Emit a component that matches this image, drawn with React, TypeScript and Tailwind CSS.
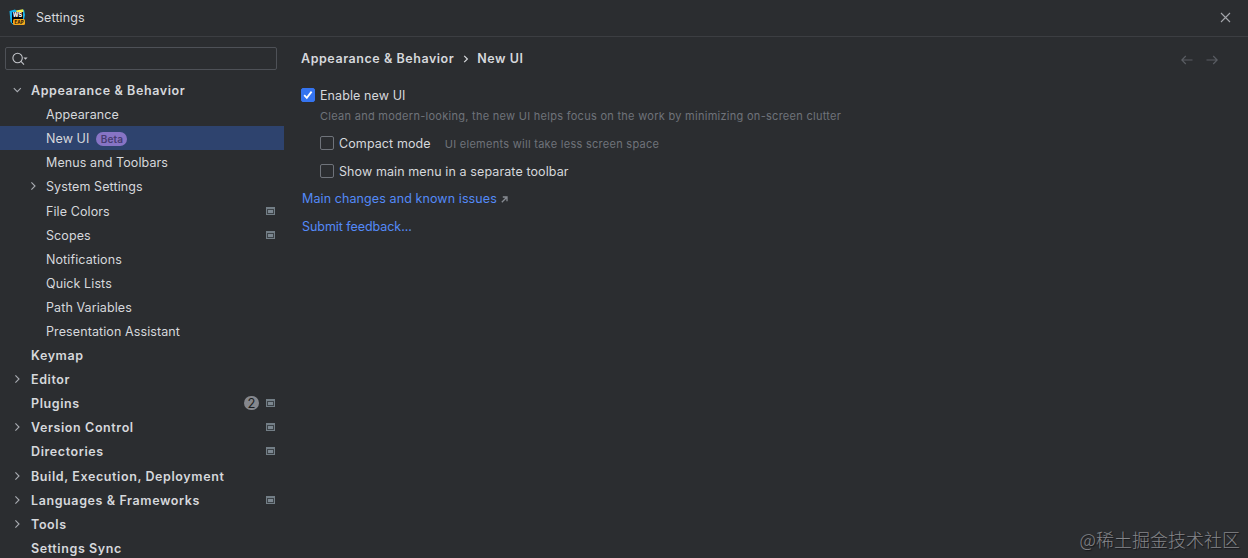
import clsx from "clsx"

type Item = {
  label: string
  level: 0 | 1
  arrow?: "open" | "closed"
  selected?: boolean
  project?: boolean
  count?: number
}

const items: Item[] = [
  { label: "Appearance & Behavior", level: 0, arrow: "open" },
  { label: "Appearance", level: 1 },
  { label: "New UI", level: 1, selected: true },
  { label: "Menus and Toolbars", level: 1 },
  { label: "System Settings", level: 1, arrow: "closed" },
  { label: "File Colors", level: 1, project: true },
  { label: "Scopes", level: 1, project: true },
  { label: "Notifications", level: 1 },
  { label: "Quick Lists", level: 1 },
  { label: "Path Variables", level: 1 },
  { label: "Presentation Assistant", level: 1 },
  { label: "Keymap", level: 0 },
  { label: "Editor", level: 0, arrow: "closed" },
  { label: "Plugins", level: 0, project: true, count: 2 },
  { label: "Version Control", level: 0, arrow: "closed", project: true },
  { label: "Directories", level: 0, project: true },
  { label: "Build, Execution, Deployment", level: 0, arrow: "closed" },
  { label: "Languages & Frameworks", level: 0, arrow: "closed", project: true },
  { label: "Tools", level: 0, arrow: "closed" },
  { label: "Settings Sync", level: 0 },
]

const Logo = () => (
  <svg width="17" height="17" viewBox="0 0 17 17" className="shrink-0">
    <path d="M0.5 2 L6 0.5 L9 3 L15 0.5 L16 6 L14 15 L4 15.5 L1.5 13 Z" fill="#16b5ee" />
    <path d="M7 1.5 L14 0.3 L14.5 3 L8 4 Z" fill="#f2f04c" />
    <rect x="3" y="3" width="11" height="11" fill="#050708" />
    <text x="3.8" y="8.4" fontSize="5.5" fontWeight="800" fill="#fff" letterSpacing="0">WS</text>
    <rect x="4" y="10" width="12" height="6" rx="1.5" fill="#f5a81c" />
    <text x="5.6" y="14.7" fontSize="4.5" fontWeight="800" fill="#3a2607" letterSpacing="0">EAP</text>
  </svg>
)

const Chevron = ({ open }: { open?: boolean }) => (
  <svg width="10" height="10" viewBox="0 0 10 10" fill="none" stroke="#a9acb2" strokeWidth="1.1">
    {open ? <path d="M1.8 3.2 L5.3 6.7 L8.8 3.2" /> : <path d="M3.4 1.3 L7 5 L3.4 8.7" />}
  </svg>
)

const ProjectIcon = () => (
  <svg width="9" height="8" viewBox="0 0 9 8" shapeRendering="crispEdges">
    <rect width="9" height="8" fill="#737e86" />
    <rect x="1" y="2" width="7" height="5" fill="#3c4247" />
    <rect x="2" y="3" width="5" height="3" fill="#7c8790" />
  </svg>
)

const Row = ({ item }: { item: Item }) => (
  <div className={clsx("flex h-[24.1px] items-center pr-[9px]", item.selected && "bg-[#2e436e]")}>
    <span className={clsx("flex shrink-0 items-center", item.level === 0 ? "w-[31px] pl-3" : "w-[46px] pl-[28px]")}>
      {item.arrow && <Chevron open={item.arrow === "open"} />}
    </span>
    <span className={clsx("whitespace-nowrap pt-[2px]", item.level === 0 && "font-semibold tracking-[0.6px]")}>
      {item.label}
    </span>
    {item.selected && (
      <span className="ml-[7px] mt-px flex h-[14px] w-[31px] items-center justify-center rounded-full bg-[#8774c5] text-[10px] font-semibold text-[#463c72]">
        Beta
      </span>
    )}
    <span className="ml-auto flex items-center gap-[7px]">
      {item.count && (
        <span className="flex h-[14px] w-[15px] items-center justify-center rounded-full bg-[#85878d] text-[13px] text-[#1e1f22]">
          {item.count}
        </span>
      )}
      {item.project && <ProjectIcon />}
    </span>
  </div>
)

const Checkbox = ({ checked }: { checked?: boolean }) => (
  <span
    className={clsx(
      "flex size-[14px] shrink-0 items-center justify-center rounded-[2px] border",
      checked ? "border-[#3574f0] bg-[#3574f0]" : "border-[#6f737a]"
    )}
  >
    {checked && (
      <svg width="10" height="10" viewBox="0 0 10 10" fill="none" stroke="#fff" strokeWidth="1.8" className="shrink-0">
        <path d="M1.2 5.2 L3.8 7.8 L8.6 1.6" />
      </svg>
    )}
  </span>
)

const Arrow = ({ back }: { back?: boolean }) => (
  <svg width="12" height="10" viewBox="0 0 12 10" fill="none" stroke="#5a5d63" strokeWidth="1.1">
    {back ? <path d="M11.5 5 H0.8 M4.8 1 L0.8 5 L4.8 9" /> : <path d="M0.5 5 H11.2 M7.2 1 L11.2 5 L7.2 9" />}
  </svg>
)

const App = () => {
  return (
    <div className="relative flex h-[558px] w-[1248px] flex-col overflow-hidden bg-[#2b2d30] font-['Inter',sans-serif] text-[12.5px] leading-4 tracking-[0.1px] text-[#d6d8dc]">
      <header className="flex h-[37px] shrink-0 items-center border-b border-[#3c3e42] pb-[2px] pl-[9px] pr-[17px]">
        <Logo />
        <span className="ml-[10px] pt-[2px]">Settings</span>
        <svg width="11" height="11" viewBox="0 0 11 11" className="ml-auto" stroke="#a4a6ab" strokeWidth="1.1">
          <path d="M1 1 L10 10 M10 1 L1 10" />
        </svg>
      </header>

      <div className="flex min-h-0 flex-1">
        <aside className="w-[284px] shrink-0">
          <div className="ml-[5px] mt-[10px] flex h-[23px] w-[272px] items-center rounded-[2px] border border-[#4e5157] pl-[6px]">
            <svg width="18" height="14" viewBox="0 0 18 14" fill="none" stroke="#c3c5ca" strokeWidth="1.1">
              <circle cx="5.6" cy="6" r="4.7" />
              <path d="M9 9.4 L12 12.6" />
              <path d="M11.4 5.5 H15.6 L13.5 7.7 Z" fill="#c3c5ca" stroke="none" />
            </svg>
          </div>
          <nav className="mt-2">
            {items.map((item) => (
              <Row key={item.label} item={item} />
            ))}
          </nav>
        </aside>

        <main className="flex flex-1 flex-col pl-[17px] pr-[30px]">
          <div className="mt-[14px] flex h-4 items-center font-semibold tracking-[0.55px]">
            <span>Appearance & Behavior</span>
            <svg width="6" height="8" viewBox="0 0 6 8" fill="none" stroke="#d6d8dc" strokeWidth="1.2" className="ml-[9px] mr-2">
              <path d="M1.2 0.8 L4.4 4 L1.2 7.2" />
            </svg>
            <span>New UI</span>
            <span className="ml-auto mt-px flex gap-[13px]">
              <Arrow back />
              <Arrow />
            </span>
          </div>
          <div className="mt-5 flex h-4 items-center gap-[5px]">
            <Checkbox checked />
            <span className="pt-px">Enable new UI</span>
          </div>
          <p className="ml-[19px] mt-[5px] text-[11px] tracking-[0.28px] text-[#6f737a]">
            Clean and modern-looking, the new UI helps focus on the work by minimizing on-screen clutter
          </p>
          <div className="ml-[19px] mt-[11px] flex h-4 items-center">
            <Checkbox />
            <span className="ml-[5px] pt-[2px]">Compact mode</span>
            <span className="ml-[14px] pt-[2px] text-[11px] tracking-[0.28px] text-[#6f737a]">UI elements will take less screen space</span>
          </div>
          <div className="ml-[19px] mt-3 flex h-4 items-center gap-[5px]">
            <Checkbox />
            <span className="pt-[2px]">Show main menu in a separate toolbar</span>
          </div>
          <a className="ml-px mt-3 flex h-4 items-center gap-1 text-[#548af7]">
            Main changes and known issues
            <svg width="7" height="7" viewBox="0 0 7 7" fill="none" stroke="#868a91" strokeWidth="1.3">
              <path d="M0.8 6.2 L5.8 1.2 M1.8 1 H6 V5.2" />
            </svg>
          </a>
          <a className="ml-px mt-3 tracking-[-0.05px] text-[#548af7]">Submit feedback...</a>
        </main>
      </div>

      <div className="absolute bottom-[5px] right-[8px] whitespace-nowrap font-['Noto_Sans_CJK_SC',sans-serif] text-[18px] font-light leading-7 tracking-normal text-[#85868a] [text-shadow:1px_1px_1px_#16171a]">
        @稀土掘金技术社区
      </div>
    </div>
  )
}

export default App
